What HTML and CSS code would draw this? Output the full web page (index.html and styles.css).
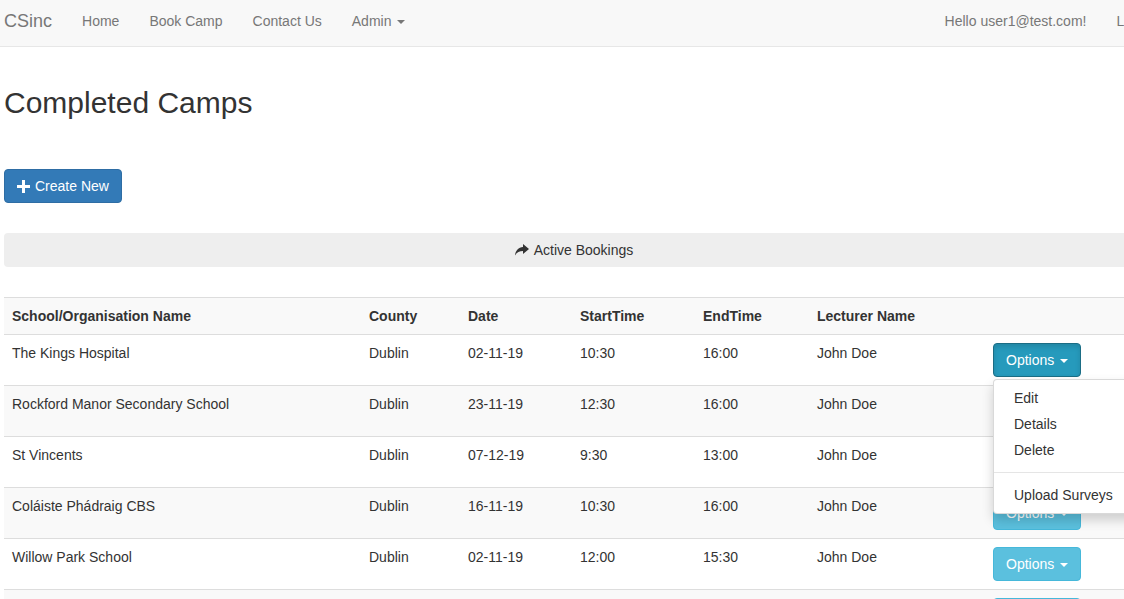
FILE: index.html
```html
<!DOCTYPE html>
<html lang="en">
<head>
<meta charset="utf-8">
<title>Completed Camps - CSinc</title>
<link rel="stylesheet" href="styles.css">
</head>
<body>
<nav class="navbar">
  <div class="navbar-inner">
    <a class="brand" href="#">CSinc</a>
    <ul class="nav">
      <li><a href="#">Home</a></li>
      <li><a href="#">Book Camp</a></li>
      <li><a href="#">Contact Us</a></li>
      <li><a href="#">Admin <span class="caret"></span></a></li>
    </ul>
    <ul class="nav nav-right">
      <li><a href="#">Hello user1@test.com!</a></li>
      <li><a href="#">Log off</a></li>
    </ul>
  </div>
</nav>

<main class="content">
  <h2 class="title">Completed Camps</h2>

  <a class="btn btn-primary create" href="#">
    <svg class="icon-plus" width="13" height="13" viewBox="0 0 13 13" aria-hidden="true"><path d="M5 0h3v5h5v3H8v5H5V8H0V5h5z" fill="#fff"/></svg>
    Create New
  </a>

  <a class="bookings-bar" href="#">
    <svg class="icon-share" width="14" height="12" viewBox="0 0 14 12" aria-hidden="true"><path d="M8 0 L14 5 L8 10 V7 C4.5 7 2 8 0 11.5 C0.6 6.5 3.5 3.2 8 3 Z" fill="#333"/></svg>
    Active Bookings
  </a>

  <table class="camps">
    <colgroup>
      <col style="width:357px"><col style="width:99px"><col style="width:112px"><col style="width:123px"><col style="width:114px"><col style="width:176px"><col style="width:159px">
    </colgroup>
    <tbody>
      <tr class="stripe">
        <th>School/Organisation Name</th><th>County</th><th>Date</th><th>StartTime</th><th>EndTime</th><th>Lecturer Name</th><th></th>
      </tr>
      <tr>
        <td>The Kings Hospital</td><td>Dublin</td><td>02-11-19</td><td>10:30</td><td>16:00</td><td>John Doe</td>
        <td>
          <div class="btn-group">
            <button class="btn btn-info is-open" type="button">Options <span class="caret"></span></button>
            <ul class="dropdown-menu">
              <li><a href="#">Edit</a></li>
              <li><a href="#">Details</a></li>
              <li><a href="#">Delete</a></li>
              <li class="divider"></li>
              <li><a href="#">Upload Surveys</a></li>
            </ul>
          </div>
        </td>
      </tr>
      <tr class="stripe">
        <td>Rockford Manor Secondary School</td><td>Dublin</td><td>23-11-19</td><td>12:30</td><td>16:00</td><td>John Doe</td>
        <td><div class="btn-group"><button class="btn btn-info" type="button">Options <span class="caret"></span></button></div></td>
      </tr>
      <tr>
        <td>St Vincents</td><td>Dublin</td><td>07-12-19</td><td>9:30</td><td>13:00</td><td>John Doe</td>
        <td><div class="btn-group"><button class="btn btn-info" type="button">Options <span class="caret"></span></button></div></td>
      </tr>
      <tr class="stripe">
        <td>Coláiste Phádraig CBS</td><td>Dublin</td><td>16-11-19</td><td>10:30</td><td>16:00</td><td>John Doe</td>
        <td><div class="btn-group"><button class="btn btn-info" type="button">Options <span class="caret"></span></button></div></td>
      </tr>
      <tr>
        <td>Willow Park School</td><td>Dublin</td><td>02-11-19</td><td>12:00</td><td>15:30</td><td>John Doe</td>
        <td><div class="btn-group"><button class="btn btn-info" type="button">Options <span class="caret"></span></button></div></td>
      </tr>
      <tr class="stripe">
        <td></td><td></td><td></td><td></td><td></td><td></td>
        <td><div class="btn-group"><button class="btn btn-info" type="button">Options <span class="caret"></span></button></div></td>
      </tr>
    </tbody>
  </table>
</main>
</body>
</html>
```

FILE: styles.css
```css
* { box-sizing: border-box; }

html, body {
  margin: 0;
  padding: 0;
  overflow: hidden;
  height: 599px;
}

body {
  font-family: "Liberation Sans", Arial, Helvetica, sans-serif;
  font-size: 14px;
  line-height: 20px;
  color: #333;
  background: #fff;
}

a { text-decoration: none; }

/* ---------- Navbar ---------- */
.navbar {
  background: #f8f8f8;
  border-bottom: 1px solid #e7e7e7;
  height: 47px;
  overflow: hidden;
}

.navbar-inner {
  display: flex;
  align-items: flex-start;
  width: 1174px;
  padding-left: 4px;
}

.brand {
  font-size: 18px;
  line-height: 20px;
  color: #777;
  padding: 11px 15px 15px 0;
}

.nav {
  display: flex;
  list-style: none;
  margin: 0;
  padding: 0;
}

.nav a {
  display: block;
  color: #777;
  padding: 11px 15px 15px;
  line-height: 20px;
}

.nav-right { margin-left: auto; }

.caret {
  display: inline-block;
  width: 0;
  height: 0;
  margin-left: 2px;
  vertical-align: middle;
  border-top: 4px solid;
  border-right: 4px solid transparent;
  border-left: 4px solid transparent;
}

/* ---------- Content ---------- */
.content {
  margin-left: 4px;
  width: 1140px;
}

.title {
  font-size: 30px;
  line-height: 33px;
  font-weight: normal;
  margin: 39px 0 50px;
  color: #333;
}

.btn {
  display: inline-block;
  padding: 6px 12px;
  font-family: inherit;
  font-size: 14px;
  line-height: 20px;
  border: 1px solid transparent;
  border-radius: 4px;
  cursor: pointer;
  white-space: nowrap;
}

.btn-primary {
  color: #fff;
  background: #337ab7;
  border-color: #2e6da4;
}

.create {
  display: inline-flex;
  align-items: center;
  gap: 5px;
}

.icon-plus { margin-left: 0; }

.bookings-bar {
  display: flex;
  align-items: center;
  justify-content: center;
  gap: 5px;
  margin-top: 30px;
  height: 34px;
  background: #eee;
  border-radius: 4px;
  color: #333;
}

/* ---------- Table ---------- */
.camps {
  margin-top: 30px;
  width: 1140px;
  border-collapse: collapse;
  border-spacing: 0;
  table-layout: fixed;
}

.camps th,
.camps td {
  text-align: left;
  vertical-align: top;
  padding: 8px;
  line-height: 20px;
  border-top: 1px solid #ddd;
  white-space: nowrap;
}

.camps th { font-weight: bold; }

.camps tr.stripe { background: #f9f9f9; }

.btn-group {
  position: relative;
  display: inline-block;
  vertical-align: middle;
}

.btn-info {
  color: #fff;
  background: #5bc0de;
  border-color: #46b8da;
}

.btn-info.is-open {
  background: #269abc;
  border-color: #1b6d85;
  box-shadow: inset 0 3px 5px rgba(0, 0, 0, .125);
}

.dropdown-menu {
  position: absolute;
  top: 100%;
  left: 0;
  z-index: 10;
  min-width: 160px;
  margin: 2px 0 0;
  padding: 5px 0;
  list-style: none;
  background: #fff;
  border: 1px solid rgba(0, 0, 0, .15);
  border-radius: 4px;
  box-shadow: 0 6px 12px rgba(0, 0, 0, .175);
}

.dropdown-menu a {
  display: block;
  padding: 3px 20px;
  line-height: 20px;
  color: #333;
  white-space: nowrap;
}

.dropdown-menu .divider {
  height: 1px;
  margin: 9px 0;
  background: #e5e5e5;
}
```
